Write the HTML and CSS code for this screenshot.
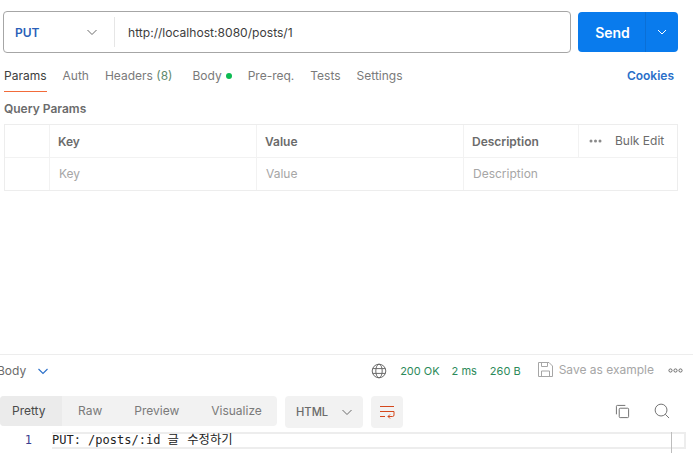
FILE: index.html
```html
<!DOCTYPE html>
<html lang="en">
<head>
<meta charset="utf-8">
<title>PUT request</title>
<link rel="stylesheet" href="styles.css">
</head>
<body>
<div class="app">
  <div class="request">
    <div class="urlbox">
      <div class="method"><span class="method-name">PUT</span>
        <svg class="chev" width="12" height="12" viewBox="0 0 12 12"><path d="M1.500 4l4.500 4.500L10.500 4" fill="none" stroke="#6b6b6b" stroke-width="1"/></svg>
      </div>
      <div class="url">http://localhost:8080/posts/1</div>
    </div>
    <div class="send">
      <div class="send-label">Send</div>
      <div class="send-more"><svg width="10" height="10" viewBox="0 0 10 10"><path d="M1 3l4 4 4-4" fill="none" stroke="#fff" stroke-width="1"/></svg></div>
    </div>
  </div>
  <div class="tabs">
    <span class="tab active">Params</span>
    <span class="tab">Auth</span>
    <span class="tab tab-headers">Headers <span class="count">(8)</span></span>
    <span class="tab tab-body">Body<i class="dot"></i></span>
    <span class="tab">Pre-req.</span>
    <span class="tab">Tests</span>
    <span class="tab">Settings</span>
    <span class="cookies">Cookies</span>
  </div>
  <div class="section-title">Query Params</div>
  <div class="table">
    <div class="row head">
      <div class="cell c0"></div>
      <div class="cell c1">Key</div>
      <div class="cell c2">Value</div>
      <div class="cell c3">Description</div>
      <div class="cell c4">
        <svg width="13" height="4" viewBox="0 0 13 4"><circle cx="2" cy="2" r="1.500" fill="#8a8a8a"/><circle cx="6.500" cy="2" r="1.500" fill="#8a8a8a"/><circle cx="11" cy="2" r="1.500" fill="#8a8a8a"/></svg>
        <span class="bulk">Bulk Edit</span>
      </div>
    </div>
    <div class="row ph">
      <div class="cell c0"></div>
      <div class="cell c1">Key</div>
      <div class="cell c2">Value</div>
      <div class="cell c3 c3-wide">Description</div>
    </div>
  </div>
  <div class="spacer"></div>
  <div class="response">
    <div class="status-row">
      <div class="body-toggle"><span class="body-label">Body</span>
        <svg width="12" height="12" viewBox="0 0 12 12"><path d="M1.500 4l4.500 4.500L10.500 4" fill="none" stroke="#2a6fc9" stroke-width="1.100"/></svg>
      </div>
      <div class="status">
        <svg class="globe" width="16" height="16" viewBox="0 0 16 16" fill="none" stroke="#6b6b6b" stroke-width="1"><circle cx="8" cy="8" r="6.800"/><ellipse cx="8" cy="8" rx="3.200" ry="6.800"/><path d="M1.600 5.600h12.800M1.600 10.400h12.800"/></svg>
        <span class="ok s1">200 OK</span>
        <span class="ok s2">2 ms</span>
        <span class="ok s3">260 B</span>
        <svg class="save" width="15" height="15" viewBox="0 0 15 15" fill="none" stroke="#a6a6a6" stroke-width="1"><path d="M.5 .5h10.500l3.500 3.500v10.500h-14z"/><path d="M3.500 .5v4h6v-4M3.500 14.500v-5.500h8v5.500"/></svg>
        <span class="save-text">Save as example</span>
        <svg class="more" width="15" height="5" viewBox="0 0 15 5" fill="none" stroke="#6b6b6b" stroke-width="1"><circle cx="2.500" cy="2.500" r="1.600"/><circle cx="7.500" cy="2.500" r="1.600"/><circle cx="12.500" cy="2.500" r="1.600"/></svg>
      </div>
    </div>
    <div class="view-row">
      <div class="views">
        <span class="view selected">Pretty</span>
        <span class="view v-raw">Raw</span>
        <span class="view v-preview">Preview</span>
        <span class="view v-visual">Visualize</span>
      </div>
      <div class="lang"><span>HTML</span>
        <svg width="12" height="12" viewBox="0 0 12 12"><path d="M1.500 4l4.500 4.500L10.500 4" fill="none" stroke="#6b6b6b" stroke-width="1"/></svg>
      </div>
      <div class="wrap">
        <svg width="16" height="14" viewBox="0 0 16 14" fill="none" stroke="#d4481d" stroke-width="1"><path d="M1 1.500h14M1 6.500h14M1 11.500h5M15 6.500v3.500a1.500 1.500 0 0 1-1.500 1.500H9M11 9.500l-2 2 2 2"/></svg>
      </div>
      <div class="tools">
        <svg width="15" height="15" viewBox="0 0 16 16" fill="none" stroke="#6b6b6b" stroke-width="1"><rect x="4.500" y="4.500" width="10" height="10" rx="1"/><path d="M11 1.500H2.500a1 1 0 0 0-1 1V11"/></svg>
        <svg width="16" height="16" viewBox="0 0 17 17" fill="none" stroke="#6b6b6b" stroke-width="1"><circle cx="7.500" cy="7.500" r="6.300"/><path d="M12 12l4 4"/></svg>
      </div>
    </div>
    <div class="code">
      <span class="ln">1</span>
      <div class="line"><span>PUT: /posts/:id <span class="ko">글 수정하기</span></span><i class="cursorbox"></i></div>
    </div>
  </div>
</div>
</body>
</html>
```
FILE: styles.css
```css
* { box-sizing: border-box; }
html, body { margin: 0; padding: 0; background: #fff; }
body { width: 693px; height: 453px; overflow: hidden; font-family: Inter, "Liberation Sans", sans-serif; font-size: 12px; color: #6b6b6b; }
.app { display: flex; flex-direction: column; height: 453px; overflow: hidden; }

.request { display: flex; gap: 7px; padding: 11px 15px 0 3px; height: 53px; }
.urlbox { flex: 1; height: 42px; border: 1px solid #a6a6a6; border-radius: 4px; display: flex; align-items: center; }
.method { width: 111px; height: 30px; padding-left: 11px; display: flex; align-items: center; border-right: 1px solid #e6e6e6; }
.method-name { width: 71px; color: #2a5fb8; font-weight: 600; font-size: 12px; }
.url { padding-left: 13px; font-size: 12.100px; color: #3d3d3d; }
.send { width: 100px; height: 40px; margin-top: 1px; background: #097bed; border-radius: 4px; display: flex; color: #fff; }
.send-label { width: 68px; border-right: 1px solid #0a6fd6; display: flex; align-items: center; justify-content: center; font-weight: 600; font-size: 14px; padding-left: 2px; }
.send-more { flex: 1; display: flex; align-items: center; justify-content: center; }

.tabs { display: flex; align-items: flex-start; height: 39px; padding: 15px 19px 0 4px; font-size: 12px; color: #7a7a7a; }
.tab { height: 24px; margin-right: 16px; line-height: 16px; white-space: nowrap; }
.tab.active { color: #3d3d3d; border-bottom: 1px solid #f26b3a; }
.tab-headers { margin-right: 20px; }
.count { color: #5f8a6e; }
.tab-body { display: flex; align-items: flex-start; }
.dot { width: 6px; height: 6px; border-radius: 50%; background: #0cbb52; margin: 5px 0 0 4px; }
.cookies { margin-left: auto; color: #2a6fc9; font-weight: 600; line-height: 16px; }

.section-title { height: 32px; padding: 9px 0 0 4px; font-weight: 600; font-size: 12px; line-height: 16px; color: #6b6b6b; }

.table { margin: 0 15px 0 4px; border: 1px solid #ededed; }
.row { display: flex; height: 32px; }
.row.ph { height: 33px; border-top: 1px solid #f2f2f2; }
.cell { display: flex; align-items: center; padding-left: 8px; border-right: 1px solid #f2f2f2; white-space: nowrap; }
.c0 { width: 45px; padding: 0; }
.c1 { width: 207px; }
.c2 { width: 207px; }
.c3 { width: 115px; }
.c3-wide { flex: 1; border-right: 0; }
.c4 { flex: 1; border-right: 0; padding-left: 10px; gap: 13px; }
.head { font-weight: 600; color: #6b6b6b; }
.ph { color: #a6a6a6; }
.ph .cell { padding-left: 9px; padding-bottom: 1px; }
.ph .c0 { padding: 0; }
.bulk { font-weight: 400; font-size: 12px; margin-top: -2px; }

.spacer { flex: 1; }

.response { border-top: 1px solid #ededed; height: 99px; }
.status-row { display: flex; align-items: center; height: 31px; padding-right: 10px; }
.body-toggle { display: flex; align-items: center; gap: 11px; margin-left: -3px; }
.body-label { font-size: 12px; color: #6b6b6b; }
.status { margin-left: auto; display: flex; align-items: center; font-size: 11px; }
.globe { margin-right: 13px; }
.ok { color: #2c8a5a; white-space: nowrap; }
.s1 { margin-right: 12px; }
.s2 { margin-right: 13px; }
.s3 { margin-right: 17px; }
.save { margin: -3px 6px 0 0; }
.save-text { color: #a6a6a6; font-size: 12px; margin: -2px 14px 0 0; }

.view-row { display: flex; height: 46px; padding-top: 10px; }
.views { display: flex; height: 30px; width: 277px; background: #f2f2f2; border-radius: 4px; align-items: center; font-size: 12px; color: #7a7a7a; }
.view { line-height: 30px; }
.selected { width: 62px; height: 30px; padding-left: 12px; background: #ebebeb; color: #4a4a4a; border-radius: 4px 0 0 4px; }
.v-raw { margin-left: 16px; }
.v-preview { margin-left: 32px; }
.v-visual { margin-left: 32px; }
.lang { margin-left: 8px; width: 78px; height: 32px; background: #f2f2f2; border-radius: 4px; display: flex; align-items: center; gap: 13px; padding-left: 11px; font-weight: 500; font-size: 11.200px; }
.wrap { margin-left: 8px; width: 32px; height: 32px; background: #f2f2f2; border-radius: 4px; display: flex; align-items: center; justify-content: center; }
.tools { margin-left: auto; display: flex; align-items: center; gap: 24px; height: 30px; padding-right: 23px; }

.code { display: flex; height: 21px; }
.ln { width: 52px; padding: 1px 20px 0 0; text-align: right; font-family: "DejaVu Sans Mono", monospace; font-size: 12px; line-height: 15px; color: #3a3f8f; }
.line { position: relative; flex: 1; margin-right: 7px; height: 17px; border: 2px solid #ededed; border-left: 0; display: block; font-family: "DejaVu Sans Mono", "Noto Sans CJK KR", monospace; font-size: 12px; line-height: 13px; color: #222; white-space: pre; }
.ko { font-size: 12.300px; word-spacing: 1px; }
.cursorbox { position: absolute; right: 0; top: -2px; width: 13px; height: 21px; border-left: 1px solid #bdbdbd; }
```
